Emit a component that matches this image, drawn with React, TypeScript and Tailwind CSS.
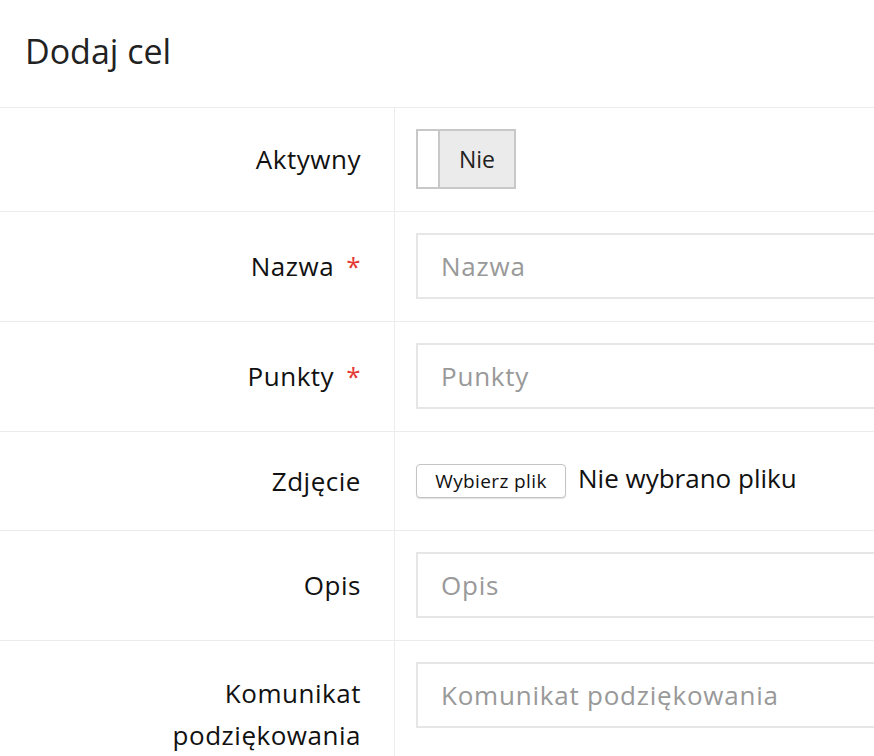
const FONT = { fontFamily: '"Open Sans", "Noto Sans", sans-serif' };

function Row({ label, required, children, labelPt, pad = "pt-[21px] pb-[22px]" }: { label: React.ReactNode; required?: boolean; children: React.ReactNode; labelPt: string; pad?: string }) {
  return (
    <div className="flex border-b border-[#ececec]">
      <div className={`w-[395px] shrink-0 border-r border-[#ececec] pr-[33px] text-right text-[26px] leading-[42px] tracking-[0.02em] text-[#111] ${labelPt}`}>
        {label}
        {required && <span className="ml-[12px] text-[#e53935]">*</span>}
      </div>
      <div className={`flex-1 pl-[21px] ${pad}`}>{children}</div>
    </div>
  );
}

function Field({ ph }: { ph: string }) {
  return (
    <div className="flex h-[66px] items-center border-2 border-r-0 border-[#e6e6e6] pl-[23px] text-[26px] tracking-[0.03em] text-[#999]">
      {ph}
    </div>
  );
}

export default function App() {
  return (
    <div className="h-[756px] w-[874px] overflow-hidden bg-white" style={FONT}>
      <div className="flex h-[108px] items-center border-b border-[#ececec] pl-[25px] text-[34px] text-[#222]">
        <span className="-mt-[4px]">Dodaj cel</span>
      </div>
      <Row label="Aktywny" labelPt="pt-[30px]">
        <div className="flex h-[60px] w-[100px] border-2 border-[#c8c8c8] bg-[#ebebeb]">
          <div className="w-[22px] border-r-2 border-[#c8c8c8] bg-white" />
          <div className="flex flex-1 items-center justify-center text-[23px] text-[#222]">Nie</div>
        </div>
      </Row>
      <Row label="Nazwa" required labelPt="pt-[33px]">
        <Field ph="Nazwa" />
      </Row>
      <Row label="Punkty" required labelPt="pt-[33px]">
        <Field ph="Punkty" />
      </Row>
      <Row label="Zdjęcie" labelPt="pt-[28px]" pad="pt-[32px] pb-[32px]">
        <div className="flex items-center">
          <div className="flex h-[34px] w-[150px] items-center justify-center rounded-[4px] border border-[#c4c4c4] bg-white text-[19px] tracking-[0.02em] text-[#111] shadow-[0_1px_1px_rgba(0,0,0,0.12)]">
            Wybierz plik
          </div>
          <span className="ml-[12px] -mt-[6px] text-[26px] text-[#111]">Nie wybrano pliku</span>
        </div>
      </Row>
      <Row label="Opis" labelPt="pt-[33px]">
        <Field ph="Opis" />
      </Row>
      <Row label={<>Komunikat<br />podziękowania</>} labelPt="pt-[31px]">
        <Field ph="Komunikat podziękowania" />
      </Row>
    </div>
  );
}
